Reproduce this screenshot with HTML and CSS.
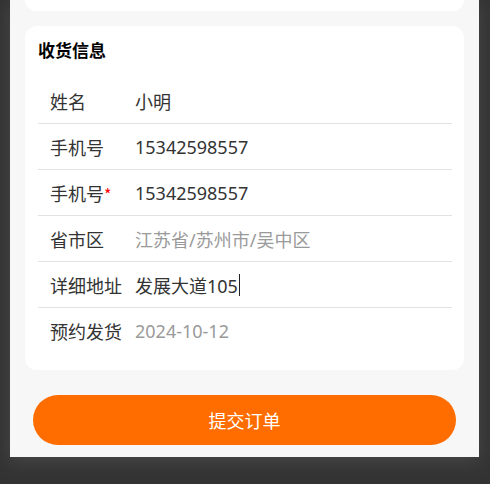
FILE: index.html
```html
<html>
  <head>
    <title>提交订单</title>
    <link rel="stylesheet" href="styles.css">
  </head>
  <body>
    <div class="page">
      <div class="card card-top"></div>

      <div class="card">
        <h3 class="card-title">收货信息</h3>
        <ul class="form-list">
          <li class="form-row"><span class="label">姓名</span><span class="value">小明</span></li>
          <li class="form-row"><span class="label">手机号</span><span class="value">15342598557</span></li>
          <li class="form-row"><span class="label">手机号<i class="required">*</i></span><span class="value">15342598557</span></li>
          <li class="form-row"><span class="label">省市区</span><span class="value placeholder">江苏省/苏州市/吴中区</span></li>
          <li class="form-row"><span class="label">详细地址</span><span class="value">发展大道105<span class="caret"></span></span></li>
          <li class="form-row"><span class="label">预约发货</span><span class="value placeholder">2024-10-12</span></li>
        </ul>
      </div>

      <button class="submit">提交订单</button>
    </div>
  </body>
</html>
```

FILE: styles.css
```css
body {
  margin: 0;
  height: 484px;
  overflow: hidden;
  background: #333;
  font-family: "Noto Sans", "Noto Sans CJK SC", sans-serif;
  color: #333;
}
.page {
  width: 469px;
  margin: 0 0 0 10px;
  padding: 0 15px 12px;
  box-sizing: border-box;
  background: #f7f7f7;
  box-shadow: 0 4px 18px #4a4a4a;
  display: flex;
  flex-direction: column;
}
.card {
  background: #fff;
  border-radius: 12px;
  padding: 13px 12px 17px 13px;
  margin-top: 15px;
}
.card-top {
  margin-top: 0;
  height: 11px;
  padding: 0;
  border-radius: 0 0 12px 12px;
}
.card-title {
  margin: 0 0 15px;
  font-size: 17px;
  line-height: 24px;
  font-weight: 700;
  color: #000;
}
.form-list {
  margin: 0;
  padding: 0;
  list-style: none;
}
.form-row {
  display: flex;
  align-items: center;
  height: 45px;
  border-bottom: 1px solid #e2e2e2;
  font-size: 18px;
}
.form-row:last-child {
  border-bottom: 0;
}
.label {
  width: 85px;
  padding-left: 12px;
  flex-shrink: 0;
}
.required {
  font-style: normal;
  font-family: "Noto Sans CJK SC", sans-serif;
  font-size: 16px;
  color: #f00;
}
.value {
  display: flex;
  align-items: center;
  color: #333;
}
.placeholder {
  color: #9a9a9a;
}
.caret {
  display: inline-block;
  width: 1px;
  height: 22px;
  margin-left: 1px;
  background: #222;
}
.submit {
  margin: 25px 8px 0;
  height: 50px;
  border: 0;
  border-radius: 25px;
  background: #ff6d00;
  color: #fff;
  font-size: 18px;
  font-family: "Noto Sans CJK SC", sans-serif;
  cursor: pointer;
}
```
